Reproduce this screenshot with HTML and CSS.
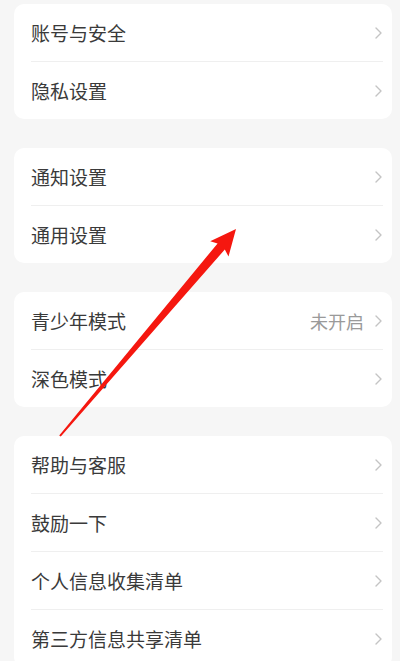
FILE: index.html
```html
<!DOCTYPE html>
<html lang="zh-CN">
<head>
<meta charset="utf-8">
<title>设置</title>
<link rel="stylesheet" href="styles.css">
</head>
<body>
<div class="page">
  <div class="card">
    <div class="row"><span class="label">账号与安全</span><span class="right"><svg class="chev" viewBox="0 0 7 12"><polyline points="1,1 6,6 1,11"/></svg></span></div>
    <div class="row"><span class="label">隐私设置</span><span class="right"><svg class="chev" viewBox="0 0 7 12"><polyline points="1,1 6,6 1,11"/></svg></span></div>
  </div>
  <div class="card">
    <div class="row"><span class="label">通知设置</span><span class="right"><svg class="chev" viewBox="0 0 7 12"><polyline points="1,1 6,6 1,11"/></svg></span></div>
    <div class="row"><span class="label">通用设置</span><span class="right"><svg class="chev" viewBox="0 0 7 12"><polyline points="1,1 6,6 1,11"/></svg></span></div>
  </div>
  <div class="card">
    <div class="row"><span class="label">青少年模式</span><span class="right"><span class="value">未开启</span><svg class="chev" viewBox="0 0 7 12"><polyline points="1,1 6,6 1,11"/></svg></span></div>
    <div class="row"><span class="label">深色模式</span><span class="right"><svg class="chev" viewBox="0 0 7 12"><polyline points="1,1 6,6 1,11"/></svg></span></div>
  </div>
  <div class="card">
    <div class="row"><span class="label">帮助与客服</span><span class="right"><svg class="chev" viewBox="0 0 7 12"><polyline points="1,1 6,6 1,11"/></svg></span></div>
    <div class="row"><span class="label">鼓励一下</span><span class="right"><svg class="chev" viewBox="0 0 7 12"><polyline points="1,1 6,6 1,11"/></svg></span></div>
    <div class="row"><span class="label">个人信息收集清单</span><span class="right"><svg class="chev" viewBox="0 0 7 12"><polyline points="1,1 6,6 1,11"/></svg></span></div>
    <div class="row"><span class="label">第三方信息共享清单</span><span class="right"><svg class="chev" viewBox="0 0 7 12"><polyline points="1,1 6,6 1,11"/></svg></span></div>
  </div>
</div>
<svg class="arrow" viewBox="0 0 400 661" width="400" height="661">
  <polygon points="236,229 228.5,256.5 224.8,249.5 60.8,436.6 59.2,435.4 217.6,243.4 210.2,241.2"/>
</svg>
</body>
</html>
```

FILE: styles.css
```css
html, body {
  margin: 0;
  padding: 0;
  background: #f6f6f6;
}
body {
  width: 400px;
  height: 661px;
  overflow: hidden;
  position: relative;
  font-family: "Noto Sans CJK SC", "Noto Sans", sans-serif;
}
.page {
  display: flex;
  flex-direction: column;
  gap: 29px;
  padding: 4px 8px 0 14px;
}
.card {
  background: #ffffff;
  border-radius: 10px;
}
.row {
  display: flex;
  align-items: center;
  justify-content: space-between;
  height: 57px;
  margin: 0 9px 0 17px;
}
.row + .row {
  border-top: 1px solid #efefef;
}
.label {
  font-size: 19px;
  color: #3a3a3a;
  line-height: 1;
}
.right {
  display: flex;
  align-items: center;
  gap: 11px;
}
.value {
  font-size: 18px;
  color: #9a9a9a;
  line-height: 1;
}
.chev {
  width: 7px;
  height: 12px;
  margin-right: 1px;
}
.chev polyline {
  fill: none;
  stroke: #c4c4c4;
  stroke-width: 1.4;
  stroke-linecap: round;
  stroke-linejoin: round;
}
.arrow {
  position: absolute;
  top: 0;
  left: 0;
  pointer-events: none;
}
.arrow polygon {
  fill: #f5170f;
}
```
